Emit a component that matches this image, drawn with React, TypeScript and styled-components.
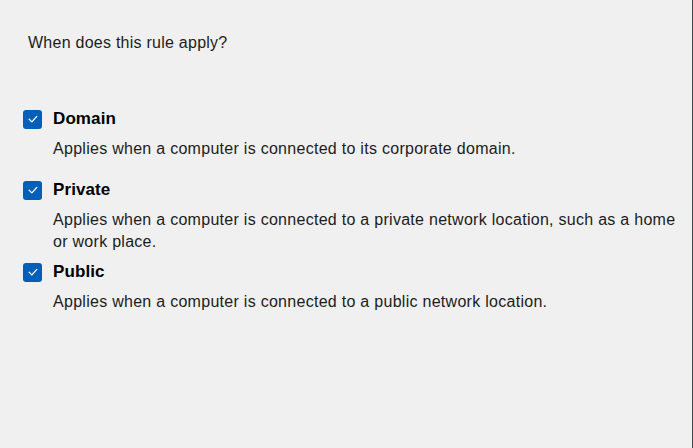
import styled, { createGlobalStyle } from 'styled-components';

const GlobalStyle = createGlobalStyle`
  html, body {
    margin: 0;
    padding: 0;
    background: #f0f0f0;
  }
`;

const profiles = [
    {name: 'Domain', text: 'Applies when a computer is connected to its corporate domain.', after: 20},
    {name: 'Private', text: 'Applies when a computer is connected to a private network location, such as a home or work place.', after: 9},
    {name: 'Public', text: 'Applies when a computer is connected to a public network location.', after: 0},
];

const CheckIcon = () => (
    <svg width="12" height="12" viewBox="0 0 12 12" fill="none">
        <path d="M2.2 6.3 L4.9 8.9 L9.8 3.4" stroke="#fff" strokeWidth="1.3" strokeLinecap="round" strokeLinejoin="round"/>
    </svg>
);

export default function App() {
    return (
        <>
            <GlobalStyle/>
            <Page>
                <Question>When does this rule apply?</Question>
                <OptionList>
                    {profiles.map(p => (
                        <Option key={p.name} $after={p.after}>
                            <Row>
                                <Checkbox><CheckIcon/></Checkbox>
                                <Label>{p.name}</Label>
                            </Row>
                            <Description>{p.text}</Description>
                        </Option>
                    ))}
                </OptionList>
            </Page>
        </>
    );
}

const Page = styled.div`
  box-sizing: border-box;
  width: 693px;
  height: 448px;
  padding: 33px 0 0 28px;
  background: #f0f0f0;
  border-right: 1px solid #3e4956;
  font-family: "Liberation Sans", Arial, sans-serif;
  color: #1c1c1c;
`

const Question = styled.div`
  font-size: 16px;
  letter-spacing: 0.25px;
  line-height: 20px;
`

const OptionList = styled.div`
  display: flex;
  flex-direction: column;
  margin-top: 56px;
  margin-left: -5px;
`

const Option = styled.div<{ $after: number }>`
  display: flex;
  flex-direction: column;
  margin-bottom: ${p => p.$after}px;
`

const Row = styled.div`
  display: flex;
  align-items: center;
  gap: 11px;
  height: 20px;
`

const Checkbox = styled.span`
  width: 19px;
  height: 19px;
  border-radius: 3px;
  background: #005fb8;
  display: flex;
  align-items: center;
  justify-content: center;
`

const Label = styled.span`
  font-size: 17px;
  font-weight: 700;
  letter-spacing: 0.1px;
  color: #000;
`

const Description = styled.div`
  margin: 9px 0 0 30px;
  max-width: 640px;
  font-size: 16px;
  letter-spacing: 0.28px;
  line-height: 22px;
  color: #1c1c1c;
`
